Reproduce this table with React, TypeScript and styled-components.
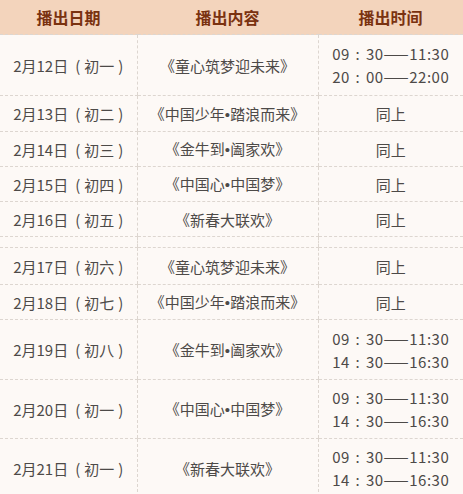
import styled, { createGlobalStyle } from 'styled-components';

const GlobalStyle = createGlobalStyle`
  html, body {
    margin: 0;
    padding: 0;
    background: #fdf9f6;
  }
  body {
    font-family: "Noto Sans CJK SC", "Noto Sans", sans-serif;
  }
`;

const Table = styled.table`
  width: 463px;
  border-collapse: collapse;
  table-layout: fixed;
  background: #fdf9f6;
  color: #4d4a48;
  font-size: 15px;
`;

const HeadCell = styled.th<{ $w: number }>`
  width: ${(p) => p.$w}px;
  height: 34px;
  padding: 0;
  background: #f3d4bc;
  color: #7a3210;
  font-size: 16px;
  font-weight: 700;
  text-align: center;
  vertical-align: middle;
  border-bottom: 1px dashed #ddd6d0;
`;

const Cell = styled.td<{ $h: number }>`
  height: ${(p) => p.$h}px;
  padding: 0;
  text-align: center;
  vertical-align: middle;
  line-height: 23px;
  white-space: nowrap;
  border-bottom: 1px dashed #ddd6d0;
  & + & {
    border-left: 1px dashed #ddd6d0;
  }
`;

const Spacer = styled.td`
  height: 10px;
  padding: 0;
  border-bottom: 1px dashed #ddd6d0;
  & + & {
    border-left: 1px dashed #ddd6d0;
  }
`;

const Paren = styled.span<{ $open?: boolean }>`
  display: inline-block;
  margin: ${(p) => (p.$open ? '0 4px 0 7px' : '0 0 0 4px')};
`;

const Dot = styled.span`
  font-family: "Liberation Sans", sans-serif;
`;

const TimeLine = styled.div`
  line-height: 23px;
  letter-spacing: 0.5px;
`;

const Colon = styled.span`
  display: inline-block;
  width: 16px;
  text-align: center;
`;

type Row =
  | { day: string; lunar: string; show: string[]; times: string[][] | null; h: number }
  | 'gap';

const am = ['09', '30', '11:30'];
const pm = ['14', '30', '16:30'];

const rows: Row[] = [
  { day: '2月12日', lunar: '初一', show: ['童心筑梦迎未来'], times: [am, ['20', '00', '22:00']], h: 60 },
  { day: '2月13日', lunar: '初二', show: ['中国少年', '踏浪而来'], times: null, h: 35 },
  { day: '2月14日', lunar: '初三', show: ['金牛到', '阖家欢'], times: null, h: 34 },
  { day: '2月15日', lunar: '初四', show: ['中国心', '中国梦'], times: null, h: 34 },
  { day: '2月16日', lunar: '初五', show: ['新春大联欢'], times: null, h: 34 },
  'gap',
  { day: '2月17日', lunar: '初六', show: ['童心筑梦迎未来'], times: null, h: 36 },
  { day: '2月18日', lunar: '初七', show: ['中国少年', '踏浪而来'], times: null, h: 34 },
  { day: '2月19日', lunar: '初八', show: ['金牛到', '阖家欢'], times: [am, pm], h: 59 },
  { day: '2月20日', lunar: '初一', show: ['中国心', '中国梦'], times: [am, pm], h: 58 },
  { day: '2月21日', lunar: '初一', show: ['新春大联欢'], times: [am, pm], h: 58 },
];

export default function App() {
  return (
    <>
      <GlobalStyle />
      <Table>
        <thead>
          <tr>
            <HeadCell $w={137}>播出日期</HeadCell>
            <HeadCell $w={181}>播出内容</HeadCell>
            <HeadCell $w={145}>播出时间</HeadCell>
          </tr>
        </thead>
        <tbody>
          {rows.map((r, i) =>
            r === 'gap' ? (
              <tr key={i}>
                <Spacer />
                <Spacer />
                <Spacer />
              </tr>
            ) : (
              <tr key={i}>
                <Cell $h={r.h}>
                  {r.day}
                  <Paren $open>(</Paren>
                  {r.lunar}
                  <Paren>)</Paren>
                </Cell>
                <Cell $h={r.h}>
                  《
                  {r.show.map((s, j) => (
                    <span key={j}>
                      {j > 0 && <Dot>•</Dot>}
                      {s}
                    </span>
                  ))}
                  》
                </Cell>
                <Cell $h={r.h}>
                  {r.times
                    ? r.times.map((t) => (
                        <TimeLine key={t[0]}>
                          {t[0]}
                          <Colon>:</Colon>
                          {t[1]}——{t[2]}
                        </TimeLine>
                      ))
                    : '同上'}
                </Cell>
              </tr>
            )
          )}
        </tbody>
      </Table>
    </>
  );
}
